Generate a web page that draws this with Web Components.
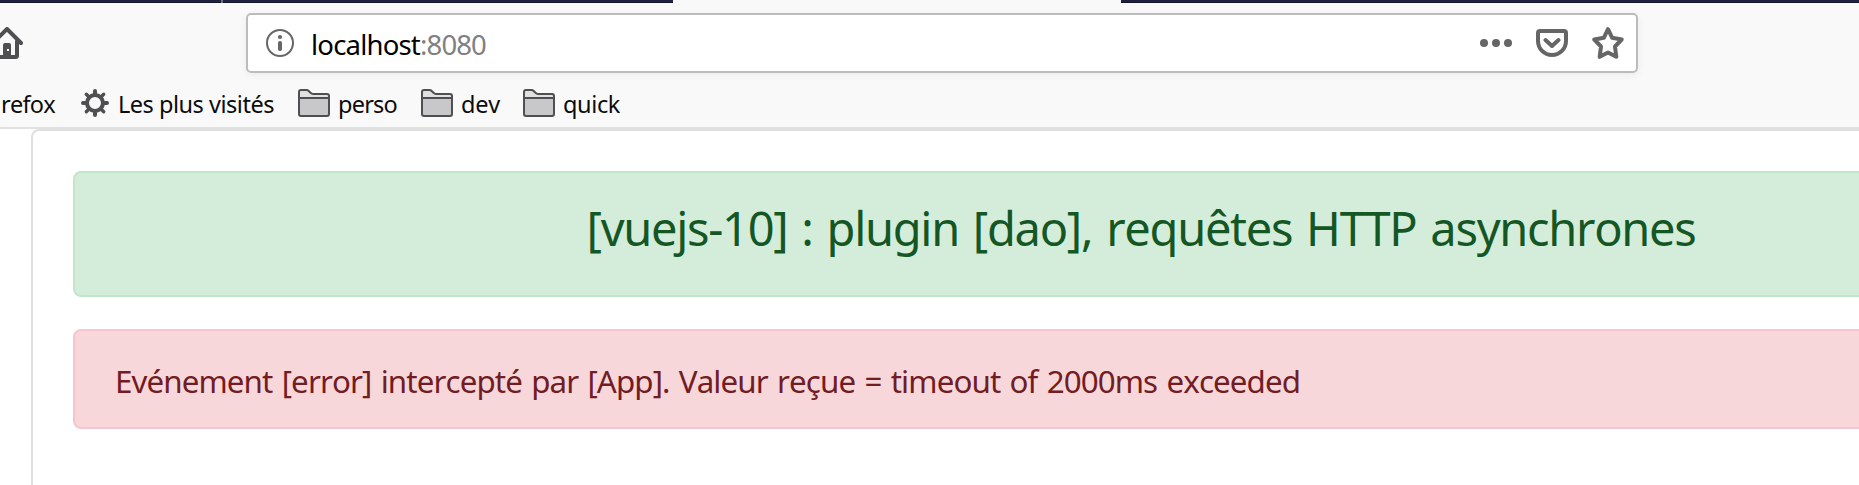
<!DOCTYPE html>
<html lang="fr">
<head>
<meta charset="utf-8">
<title>vuejs</title>
<style>
body{margin:0;width:1859px;height:485px;overflow:hidden;background:#fff;font-family:"Noto Sans","Open Sans",sans-serif}
</style>
</head>
<body>
<browser-page></browser-page>
<script>
function define(name, html, setup) {
  customElements.define(name, class extends HTMLElement {
    connectedCallback() {
      if (this.shadowRoot) return;
      this.attachShadow({mode: 'open'}).innerHTML = html;
      if (setup) setup(this);
    }
  });
}

/* A single line of text whose tracking is adjusted to fill a given width. */
define('fit-text', `<style>
:host{display:block;white-space:pre;flex:none;font-kerning:none}
span{display:inline-block}
</style><span><slot></slot></span>`, el => {
  const target = +el.getAttribute('width');
  const n = el.textContent.length;
  const natural = el.shadowRoot.querySelector('span').getBoundingClientRect().width;
  el.style.width = target + 'px';
  el.style.letterSpacing = ((target - natural) / n) + 'px';
});

const icons = {
  home: [32, 32, '<path d="M2 16 16 2 30 16M6 14V28.5a1.5 1.5 0 0 0 1.5 1.5H24.500a1.500 1.500 0 0 0 1.500-1.500V14" fill="none" stroke="#4f4f51" stroke-width="4" stroke-linecap="round" stroke-linejoin="round"/><path d="M12 30V18a2 2 0 0 1 2-2h4a2 2 0 0 1 2 2v12z" fill="#4f4f51"/><path d="M16 22h2v2h-2z" fill="#f9f9fa"/>'],
  info: [28, 28, '<circle cx="14" cy="14" r="13" fill="none" stroke="#666" stroke-width="2"/><circle cx="14" cy="8" r="2.100" fill="#666"/><rect x="12" y="12" width="4" height="10" rx="1.800" fill="#666"/>'],
  gear: [28, 28, '<g fill="none" stroke="#4f4f51" stroke-width="4" stroke-linecap="round"><circle cx="14" cy="14" r="8"/><path d="M14 2v3M14 23v3M2 14h3M23 14h3"/><path stroke-width="3.400" d="M5.300 5.300l2 2M20.700 20.700l2 2M5.300 22.700l2-2M20.700 7.300l2-2"/></g>'],
  folder: [32, 28, '<path d="M1 9V3a2 2 0 0 1 2-2h6.500l4.500 4h15a2 2 0 0 1 2 2v2z" fill="#e1e1e2"/><path d="M1 9h30v16a2 2 0 0 1-2 2H3a2 2 0 0 1-2-2z" fill="#c8c8ca"/><path d="M3 1h5.500c1 0 1.500.300 2.200 1l1.800 1.800c.700.700 1.300 1.200 2.500 1.200H29a2 2 0 0 1 2 2v18a2 2 0 0 1-2 2H3a2 2 0 0 1-2-2V3a2 2 0 0 1 2-2zM1 9h30" fill="none" stroke="#4f4f51" stroke-width="2"/>'],
  dots: [32, 8, '<g fill="#666"><circle cx="4" cy="4" r="4"/><circle cx="16" cy="4" r="4"/><circle cx="28" cy="4" r="4"/></g>'],
  pocket: [32, 28, '<path d="M4 2h24a2 2 0 0 1 2 2v8a14 14 0 0 1-28 0V4a2 2 0 0 1 2-2zM9.500 11l6.500 6 6.500-6" fill="none" stroke="#666" stroke-width="4" stroke-linecap="round" stroke-linejoin="round"/>'],
  star: [32, 32, '<path d="M16 2.200l4.200 8.600 9.500 1.700-6.700 7 1.300 10.300L16 25.500l-8.300 4.300L9 19.500l-6.700-7 9.500-1.700z" fill="none" stroke="#666" stroke-width="4" stroke-linejoin="round"/>']
};
define('ui-icon', '<style>:host{display:block;flex:none}svg{display:block}</style><div></div>', el => {
  const [w, h, body] = icons[el.getAttribute('name')];
  el.shadowRoot.querySelector('div').innerHTML =
    `<svg width="${w}" height="${h}" viewBox="0 0 ${w} ${h}">${body}</svg>`;
});

define('tab-strip', `<style>
:host{display:flex;height:3px;background:#f9f9fa}
i{background:linear-gradient(#1f2042 0 2px,#15152e 2px)}
.a{width:221px}i.s{width:2px;background:#71727f}.b{width:450px}.c{margin-left:448px;flex:1}
</style><i class="a"></i><i class="s"></i><i class="b"></i><i class="c"></i>`);

define('url-bar', `<style>
:host{box-sizing:border-box;display:flex;align-items:center;width:1392px;height:60px;padding:0 12px 0 18px;
border:2px solid #bcbcbc;border-radius:5px;background:#fff;box-shadow:0 2px 8px rgba(0,0,0,.06);font-size:27.5px;line-height:38px;color:#000}
fit-text{padding-top:3px}.host{margin-left:17px}.port{color:#808080}.tools{margin-left:auto;display:flex;align-items:center}
.pocket{margin-left:24px}.star{margin-left:24px}
</style><ui-icon name="info"></ui-icon><fit-text class="host" width="109">localhost</fit-text><fit-text class="port" width="66">:8080</fit-text>
<div class="tools"><ui-icon name="dots"></ui-icon><ui-icon class="pocket" name="pocket"></ui-icon><ui-icon class="star" name="star"></ui-icon></div>`);

define('nav-bar', `<style>
:host{display:flex;align-items:center;height:60px;padding-top:10px}
ui-icon{margin-left:-9px;margin-right:223px}
</style><ui-icon name="home"></ui-icon><url-bar></url-bar>`);

define('book-mark', `<style>
:host{display:flex;align-items:center;height:34px;font-size:23.5px;line-height:34px;color:#0c0c0d}
ui-icon{margin-right:8px}
::slotted(fit-text){padding-top:2px}
</style><slot></slot>`, el => {
  const name = el.getAttribute('icon');
  if (name) el.shadowRoot.querySelector('slot').insertAdjacentHTML('beforebegin', `<ui-icon name="${name}"></ui-icon>`);
});

define('bookmark-bar', `<style>
:host{display:flex;height:41px;padding-top:13px}
.first{margin-left:1px}.visited{margin-left:26px}.perso{margin-left:24px}.dev{margin-left:24px}.quick{margin-left:23px}
.visited fit-text{margin-left:1px}
</style>
<book-mark class="first"><fit-text width="54">refox</fit-text></book-mark>
<book-mark class="visited" icon="gear"><fit-text width="156">Les plus visités</fit-text></book-mark>
<book-mark class="perso" icon="folder"><fit-text width="59">perso</fit-text></book-mark>
<book-mark class="dev" icon="folder"><fit-text width="39">dev</fit-text></book-mark>
<book-mark class="quick" icon="folder"><fit-text width="57">quick</fit-text></book-mark>`);

define('browser-chrome', `<style>
:host{display:block;background:#f9f9fa;border-bottom:2px solid #e1e1e1}
</style><tab-strip></tab-strip><nav-bar></nav-bar><bookmark-bar></bookmark-bar>`);

define('alert-box', `<style>
:host{box-sizing:border-box;display:flex;width:2136px;border:2px solid;border-radius:8px}
:host([variant=success]){height:126px;justify-content:center;padding-top:22px;background:#d4edda;border-color:#c3e6cb;color:#155724;font-size:47px;line-height:66px;word-spacing:3px}
:host([variant=danger]){height:100px;margin-top:32px;padding:27px 0 0 40px;background:#f8d7da;border-color:#f5c6cb;color:#721c24;font-size:31.3px;line-height:46px;word-spacing:2px}
</style><slot></slot>`);

define('app-card', `<style>
:host{box-sizing:border-box;display:block;width:2220px;height:600px;margin-left:31px;padding:40px;border:2px solid #dfdfdf;border-radius:8px;background:#fff}
</style><slot></slot>`);

define('browser-page', `<style>
:host{display:block;width:1859px;height:485px;overflow:hidden}
</style><browser-chrome></browser-chrome>
<app-card>
<alert-box variant="success"><fit-text width="1109">[vuejs-10] : plugin [dao], requêtes HTTP asynchrones</fit-text></alert-box>
<alert-box variant="danger"><fit-text width="1185">Evénement [error] intercepté par [App]. Valeur reçue = timeout of 2000ms exceeded</fit-text></alert-box>
</app-card>`);
</script>
</body>
</html>
